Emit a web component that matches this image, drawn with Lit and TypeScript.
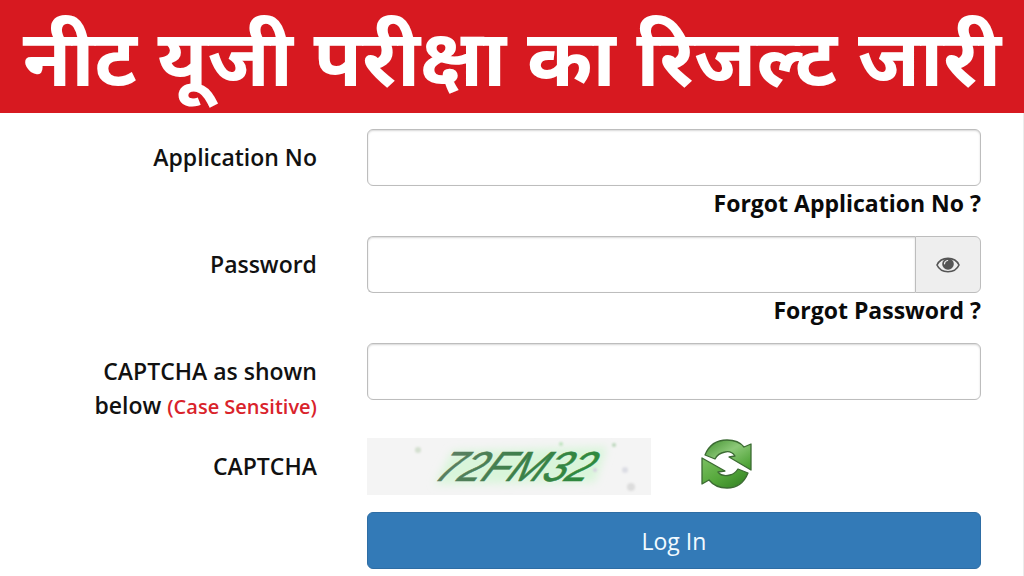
import { LitElement, html, css } from "lit";
import { customElement, state } from "lit/decorators.js";

@customElement("app-root")
export class AppRoot extends LitElement {
  @state() private reveal = false;

  static styles = css`
    :host {
      display: block;
      min-height: 100vh;
      box-sizing: border-box;
      background: #fff;
      border-right: 1px solid #ececec;
      color: #111;
      font-family: "Open Sans", "Noto Sans", sans-serif;
      font-size: 23px;
      line-height: 34px;
    }
    * {
      box-sizing: border-box;
    }
    .banner {
      background: #d71920;
      margin-right: -1px;
      padding-top: 21px;
      display: flex;
      justify-content: center;
    }
    .title {
      margin: 0;
      color: #fff;
      font-family: "Noto Sans Devanagari", "Noto Sans", sans-serif;
      font-weight: 700;
      font-size: 79px;
      line-height: 92px;
      white-space: nowrap;
    }
    .form {
      display: grid;
      grid-template-columns: minmax(0, 4fr) minmax(0, 9fr);
      column-gap: 50px;
      padding: 16px 42px 7px 44px;
    }
    .label {
      text-align: right;
      font-weight: 600;
      padding-top: 11px;
    }
    .note {
      color: #d9232b;
      font-size: 20px;
      white-space: nowrap;
    }
    .field {
      display: flex;
      flex-direction: column;
      min-height: 107px;
    }
    .input {
      width: 100%;
      height: 57px;
      border: 1px solid #bdbdbd;
      border-radius: 6px;
      background: #fff;
      box-shadow: inset 0 1px 2px rgba(0, 0, 0, 0.16);
      padding: 0 20px;
      font: inherit;
      color: inherit;
    }
    .group {
      display: flex;
    }
    .group .input {
      flex: 1;
      min-width: 0;
      border-radius: 6px 0 0 6px;
      border-right-width: 0;
    }
    .eye {
      width: 66px;
      height: 57px;
      padding: 0;
      display: grid;
      place-items: center;
      background: #eee;
      border: 1px solid #bdbdbd;
      border-radius: 0 6px 6px 0;
      color: #555;
      cursor: pointer;
    }
    .link {
      align-self: flex-end;
      color: #0a0a0a;
      font-weight: 700;
      text-decoration: none;
    }
    .captcha {
      display: flex;
      align-items: flex-start;
      gap: 47px;
      height: 57px;
      margin-bottom: 17px;
    }
    .challenge {
      width: 284px;
      height: 57px;
      background: #f4f4f4;
    }
    .refresh {
      padding: 0;
      border: 0;
      background: none;
      width: 56px;
      height: 56px;
      cursor: pointer;
    }
    .short {
      min-height: 95px;
    }
    .submit {
      grid-column: 2;
      height: 57px;
      border: 1px solid #2e6da4;
      border-radius: 6px;
      background: #337ab7;
      color: #f2faff;
      font: inherit;
      cursor: pointer;
    }
    svg {
      display: block;
    }
  `;

  render() {
    return html`
      <header class="banner">
        <h1 class="title" lang="hi">नीट यूजी परीक्षा का रिजल्ट जारी</h1>
      </header>
      <form class="form" @submit=${(e: Event) => e.preventDefault()}>
        <label class="label" for="application">Application No</label>
        <div class="field">
          <input class="input" id="application" type="text" />
          <a class="link" href="#application">Forgot Application No ?</a>
        </div>

        <label class="label" for="password">Password</label>
        <div class="field">
          <div class="group">
            <input class="input" id="password" type=${this.reveal ? "text" : "password"} />
            <button class="eye" type="button" aria-label="Show password"
              @click=${() => (this.reveal = !this.reveal)}>
              <svg width="24" height="16" viewBox="0 0 24 16">
                <path d="M1 8C5-.9 19-.9 23 8C19 16.900 5 16.900 1 8Z" fill="none" stroke="currentColor" stroke-width="1.600" />
                <circle cx="12" cy="7" r="5.800" fill="currentColor" />
                <path d="M8.500 6.800Q8.700 3.900 11.600 3.500" fill="none" stroke="#eee" stroke-width="1.200" stroke-linecap="round" />
              </svg>
            </button>
          </div>
          <a class="link" href="#password">Forgot Password ?</a>
        </div>

        <label class="label" for="code">CAPTCHA as shown below <span class="note">(Case Sensitive)</span></label>
        <div class="field short">
          <input class="input" id="code" type="text" />
        </div>

        <div class="label">CAPTCHA</div>
        <div class="captcha">
          <svg class="challenge" viewBox="0 0 284 57" role="img" aria-label="CAPTCHA image">
            <defs>
              <filter id="soft" x="-20%" y="-40%" width="140%" height="180%"><feGaussianBlur stdDeviation="4" /></filter>
              <filter id="dot" x="-50%" y="-50%" width="200%" height="200%"><feGaussianBlur stdDeviation="1" /></filter>
              <linearGradient id="ink" x1="0" y1="0" x2="1" y2="0">
                <stop offset="0" stop-color="#5c7f62" />
                <stop offset="0.500" stop-color="#3d7f4a" />
                <stop offset="1" stop-color="#2e8a3d" />
              </linearGradient>
            </defs>
            <path d="M86 13L240 9L228 44L68 46Z" fill="#d9f5da" filter="url(#soft)" />
            <g filter="url(#dot)">
              <circle cx="51" cy="12" r="3" fill="#d3dfcf" />
              <circle cx="247" cy="7" r="2" fill="#b9d6b9" />
              <circle cx="258" cy="32" r="3" fill="#dcdde4" />
              <circle cx="264" cy="49" r="4" fill="#dcdcdc" />
              <circle cx="228" cy="32" r="2" fill="#d5cfe0" />
              <circle cx="194" cy="6" r="2" fill="#bde3bd" />
            </g>
            <text x="68" y="43" transform="translate(22 0) skewX(-30)" font-family="Liberation Sans" font-style="italic" font-size="42" fill="url(#ink)" stroke="url(#ink)" stroke-width="0.600">72FM32</text>
          </svg>
          <button class="refresh" type="button" aria-label="Refresh CAPTCHA">
            <svg width="56" height="56" viewBox="0 0 56 56">
              <defs>
                <linearGradient id="leafA" x1="0" y1="0" x2="1" y2="1">
                  <stop offset="0" stop-color="#3f8f2c" />
                  <stop offset="0.450" stop-color="#8cc878" />
                  <stop offset="1" stop-color="#3f9a26" />
                </linearGradient>
                <linearGradient id="leafB" x1="0" y1="0" x2="1" y2="1">
                  <stop offset="0" stop-color="#7cc062" />
                  <stop offset="0.500" stop-color="#56a83c" />
                  <stop offset="1" stop-color="#2f7d20" />
                </linearGradient>
              </defs>
              <g stroke="#3c6b33" stroke-width="1.300" stroke-linejoin="round">
                <path fill="url(#leafA)" d="M7 17C11 7 19 2 29 2C36 2 42 4 46 9L53 6V32L31 19L37 18C35 15 31 13 27 14C22 15 19 17 17 21Z" />
                <path fill="url(#leafB)" d="M4 20L27 33L20 34C23 38 28 38 32 37C36 36 38 34 40 31L50 35C46 45 38 50 29 50C21 50 15 47 11 42L4 46Z" />
              </g>
            </svg>
          </button>
        </div>

        <button class="submit" type="submit">Log In</button>
      </form>
    `;
  }
}
